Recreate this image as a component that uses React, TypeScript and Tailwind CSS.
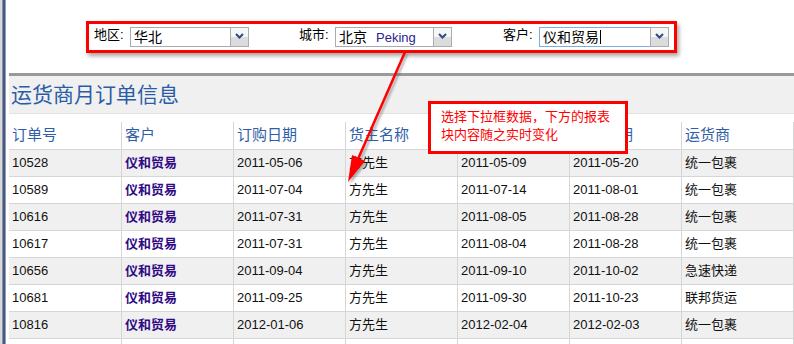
import React from "react";

const rows = [
  ["10528", "2011-05-06", "方先生", "2011-05-09", "2011-05-20", "统一包裹"],
  ["10589", "2011-07-04", "方先生", "2011-07-14", "2011-08-01", "统一包裹"],
  ["10616", "2011-07-31", "方先生", "2011-08-05", "2011-08-28", "统一包裹"],
  ["10617", "2011-07-31", "方先生", "2011-08-04", "2011-08-28", "统一包裹"],
  ["10656", "2011-09-04", "方先生", "2011-09-10", "2011-10-02", "急速快递"],
  ["10681", "2011-09-25", "方先生", "2011-09-30", "2011-10-23", "联邦货运"],
  ["10816", "2012-01-06", "方先生", "2012-02-04", "2012-02-03", "统一包裹"],
];

const headers = ["订单号", "客户", "订购日期", "货主名称", "发货日期", "要求日期", "运货商"];

function Chevron() {
  return (
    <svg width="9" height="6" viewBox="0 0 9 6" className="-mt-[3px]">
      <path d="M1 1 L4.5 4.5 L8 1" fill="none" stroke="#2f4a86" strokeWidth="2" />
    </svg>
  );
}

function Select({
  width,
  focused,
  children,
}: {
  width: string;
  focused?: boolean;
  children: React.ReactNode;
}) {
  return (
    <div className={`flex h-[20px] shrink-0 ${width}`}>
      <div
        className={`flex flex-1 items-center overflow-hidden whitespace-nowrap border bg-white pl-[3px] text-[14px] leading-none text-black ${
          focused ? "border-[#7eaee0]" : "border-[#a7acb4]"
        }`}
      >
        {children}
      </div>
      <div className="-ml-px flex w-[19px] items-center justify-center border border-[#a9adb3] bg-[linear-gradient(#f6f6f6_0%,#f6f6f6_50%,#dcdcdc_50%,#dcdcdc_100%)]">
        <Chevron />
      </div>
    </div>
  );
}

export default function App() {
  return (
    <div className="relative flex h-[344px] w-[794px] items-start overflow-hidden bg-white font-['Liberation_Sans','Noto_Sans_CJK_SC',sans-serif]">
      {/* left window edge */}
      <div className="flex h-[344px] w-[9px] shrink-0">
        <div className="w-[2px] bg-[#d9d9d9]" />
        <div className="w-[1px] bg-[#8d8f94]" />
        <div className="w-[2px] bg-[#3f5990]" />
        <div className="w-[1px] bg-[#9aa0aa]" />
        <div className="w-[3px] bg-white" />
      </div>

      <div className="flex w-[785px] shrink-0 flex-col">
        {/* filter area */}
        <div className="h-[73px] shrink-0 pl-[77px] pt-[21px]">
          <div className="flex h-[32px] w-[591px] items-center border-[3px] border-[#ff0000] bg-white pl-[5px] shadow-[2px_3px_4px_rgba(0,0,0,0.35)]">
            <div className="mb-[4px] w-[36px] shrink-0 text-[13px] text-black">地区:</div>
            <Select width="w-[119px]">华北</Select>
            <div className="w-[50px] shrink-0" />
            <div className="mb-[4px] w-[36px] shrink-0 text-[13px] text-black">城市:</div>
            <Select width="w-[117px]">
              <span>北京</span>
              <span className="ml-[9px] text-[13px] text-[#2b2490]">Peking</span>
            </Select>
            <div className="w-[51px] shrink-0" />
            <div className="mb-[4px] w-[36px] shrink-0 text-[13px] text-black">客户:</div>
            <Select width="w-[130px]" focused>
              <span>仪和贸易</span>
              <span className="ml-px h-[14px] w-px bg-black" />
            </Select>
          </div>
        </div>

        {/* grey separator */}
        <div className="h-[3px] shrink-0 bg-[#9a9a9a]" />

        {/* title */}
        <div className="flex h-[38px] shrink-0 items-center border-b border-[#e2e2e2] bg-[#f0f0f0] pl-[2px] text-[21px] text-[#2c5ca8]">
          运货商月订单信息
        </div>
        <div className="h-[8px] shrink-0 bg-white" />

        {/* table */}
        <div className="grid shrink-0 grid-cols-[113px_112px_112px_112px_112px_112px_112px]">
          {headers.map((h) => (
            <div
              key={h}
              className="flex h-[28px] items-center border-b border-r border-[#d6d6d6] bg-white pl-[3px] text-[15px] text-[#2f5ea9]"
            >
              {h}
            </div>
          ))}
          {rows.map((r, ri) => {
            const bg = ri % 2 === 0 ? "bg-[#f0f0f0]" : "bg-white";
            const cells = [r[0], "仪和贸易", r[1], r[2], r[3], r[4], r[5]];
            return cells.map((c, ci) => (
              <div
                key={`${ri}-${ci}`}
                className={`flex h-[27px] items-center border-b border-r border-[#d6d6d6] pl-[3px] text-[13px] ${bg} ${
                  ci === 1 ? "font-bold text-[#300a84]" : "text-[#111]"
                }`}
              >
                {c}
              </div>
            ));
          })}
          {headers.map((h) => (
            <div key={`last-${h}`} className="h-[27px] border-r border-[#d6d6d6] bg-white" />
          ))}
        </div>
      </div>

      {/* callout */}
      <div className="absolute left-[428px] top-[101px] h-[53px] w-[200px] border-[3px] border-[#ff0000] bg-white pl-[10px] pt-[4px] text-[13px] leading-[18px] text-[#ff0000]">
        <div>选择下拉框数据，下方的报表</div>
        <div>块内容随之实时变化</div>
      </div>

      {/* arrow */}
      <svg className="pointer-events-none absolute left-0 top-0" width="794" height="344">
        <defs>
          <filter id="blur" x="-20%" y="-20%" width="140%" height="140%">
            <feGaussianBlur stdDeviation="1.2" />
          </filter>
        </defs>
        <g filter="url(#blur)" opacity="0.45" transform="translate(2,2)">
          <line x1="405" y1="52" x2="358" y2="159" stroke="#555" strokeWidth="2.5" />
          <polygon points="348,182 365,161 352,155" fill="#555" />
        </g>
        <line x1="405" y1="52" x2="358" y2="159" stroke="#ff0000" strokeWidth="2.5" />
        <polygon points="348,182 365,161 352,155" fill="#ff0000" />
      </svg>
    </div>
  );
}
